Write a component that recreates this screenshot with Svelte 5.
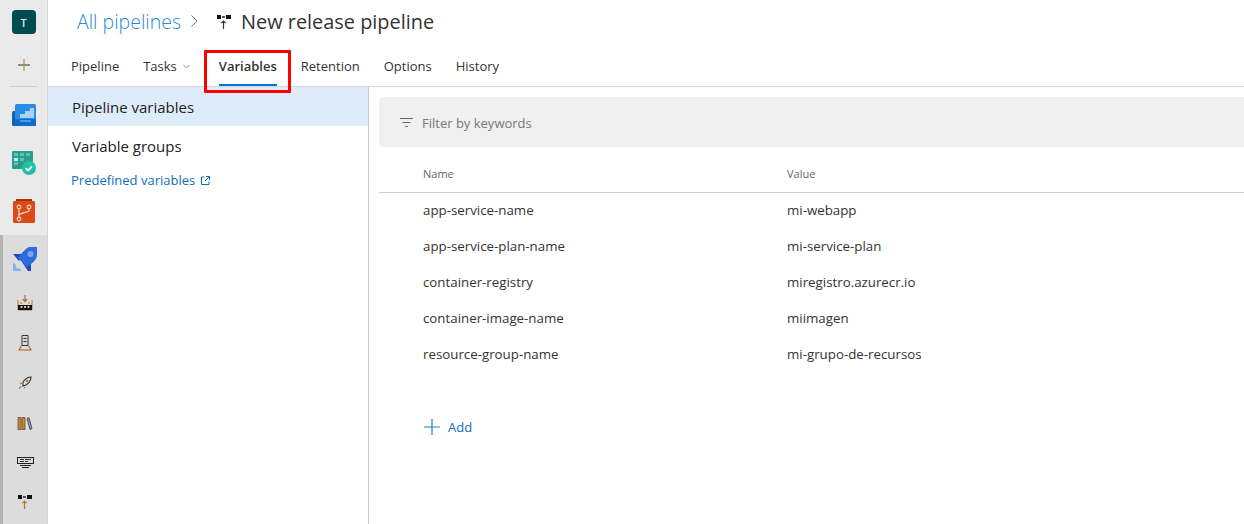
<script>
  const tabs = [
    { label: 'Pipeline' },
    { label: 'Tasks', caret: true },
    { label: 'Variables', active: true },
    { label: 'Retention' },
    { label: 'Options' },
    { label: 'History' }
  ];
  const variables = [
    ['app-service-name', 'mi-webapp'],
    ['app-service-plan-name', 'mi-service-plan'],
    ['container-registry', 'miregistro.azurecr.io'],
    ['container-image-name', 'miimagen'],
    ['resource-group-name', 'mi-grupo-de-recursos']
  ];
</script>

{#snippet pipelineIcon(arrow)}
  <svg class="pipe" width="16" height="16" viewBox="0 0 16 16">
    <rect x="1" y="0" width="4" height="4" fill="#111" />
    <rect x="6" y="1" width="3" height="2" fill="#555" />
    <rect x="10" y="0" width="5" height="4" fill="#111" />
    <path d="M7.500 14V6M5.300 8.200 7.500 6l2.200 2.200" fill="none" stroke={arrow} stroke-width="1.200" />
  </svg>
{/snippet}

<div class="page">
  <nav class="rail">
    <div class="rail-top">
      <div class="avatar">T</div>
      <svg class="plus" width="14" height="14" viewBox="0 0 14 14">
        <path d="M1 7h12" stroke="#333" stroke-width="1" />
        <path d="M7 1v12" stroke="#c58a3c" stroke-width="1.200" />
      </svg>
      <div class="rail-rule"></div>
      <svg class="boards" width="24" height="22" viewBox="0 0 24 22">
        <rect x="0" y="7" width="8" height="15" rx="1.500" fill="#1464b4" />
        <rect x="3" y="0" width="21" height="22" rx="1.500" fill="#2a8ae4" />
        <path d="M20 4h2v10H8v-4h5V7h5V4z" fill="#a6d2f4" />
        <rect x="3" y="15" width="21" height="7" fill="#0f6cc8" />
        <rect x="8" y="16" width="11" height="2" fill="#4a9fe4" />
      </svg>
      <svg class="tasks" width="24" height="24" viewBox="0 0 24 24">
        <rect x="0" y="0" width="21" height="18" rx="1.200" fill="#2a9d8f" />
        <path d="M2 2h4v3H2zM8 2h4v3H8zM14 2h4v3h-4zM8 7h4v3H8zM2 11h4v3H2z" fill="#5cc2b3" />
        <rect x="2" y="7" width="4" height="3" fill="#c8efe6" />
        <circle cx="17" cy="17" r="7" fill="#1fc0a5" />
        <path d="M13.600 17.200l2.400 2.300 4-4.200" fill="none" stroke="#fff" stroke-width="1.800" />
      </svg>
      <svg class="repos" width="22" height="24" viewBox="0 0 22 24">
        <rect x="3" y="0" width="16" height="3" fill="#a83408" />
        <rect x="0" y="2" width="22" height="22" rx="1.200" fill="#dc4a16" />
        <g fill="none" stroke="#f6d6c6" stroke-width="1.200">
          <circle cx="6" cy="8" r="1.800" />
          <circle cx="16" cy="8" r="1.800" />
          <circle cx="6" cy="20" r="1.800" />
          <path d="M6 10v8M16 10v1.500c0 2-10 2.500-10 5" />
        </g>
      </svg>
    </div>

    <div class="rail-bottom">
      <svg class="rocket" width="24" height="24" viewBox="0 0 24 24">
        <path d="M0 7h10L6 14zM9 15l9-2v11h-3z" fill="#1a4cc0" />
        <path d="M16 0h8v8c0 5-6 9-10 12l-9-9c3-4 7-9 11-11z" fill="#2f6ae0" />
        <circle cx="17.500" cy="7" r="3" fill="#7ba6f2" />
        <path d="M0 24v-9l3 3v3h3l3 3z" fill="#8fb0f0" />
      </svg>
      <svg class="sub" width="16" height="16" viewBox="0 0 16 16">
        <path d="M8 0v6M5.800 4 8 6.500 10.200 4" fill="none" stroke="#a8722f" stroke-width="1.200" />
        <path d="M1 5v10h14V5M4 7v2M12 7v2" fill="none" stroke="#b8752c" stroke-width="1" />
        <rect x="1" y="10" width="14" height="5" fill="#111" />
        <path d="M3.500 12h2M7 12h2M10.500 12h2" stroke="#fff" stroke-width="1.500" />
      </svg>
      <svg class="sub" width="16" height="16" viewBox="0 0 16 16">
        <path d="M5 .5h6v10H5zM6.500 3.500h3M6.500 6.500h3" fill="none" stroke="#333" stroke-width="1" />
        <path d="M4.500 10.500 2 15h12l-2.500-4.500" fill="none" stroke="#a8622c" stroke-width="1.100" />
      </svg>
      <svg class="sub" width="16" height="16" viewBox="0 0 16 16">
        <path d="M6 7c2-3 5-5 8-5 0 3-2 6-5 8l-3 1z" fill="none" stroke="#333" stroke-width="1.100" />
        <circle cx="10" cy="6" r="1.200" fill="#b8752c" />
        <path d="M5 8 3 9M8 12l-1 1M4 11l-2 3" stroke="#a8722f" stroke-width="1.100" />
      </svg>
      <svg class="sub" width="16" height="16" viewBox="0 0 16 16">
        <path d="M1 2.500h3v12H1zM5 2.500h3v12H5z" fill="#c58a3c" stroke="#704a20" stroke-width=".8" />
        <path d="M10 3.500l2-.8 3 11-2 .8z" fill="#7fa8c8" stroke="#333" stroke-width=".8" />
      </svg>
      <svg class="sub" width="17" height="16" viewBox="0 0 17 16">
        <rect x=".5" y="2.500" width="16" height="6" fill="none" stroke="#222" />
        <path d="M3 4.500h4M8 4.500h6M3 6.500h4M8 6.500h3" stroke="#333" />
        <path d="M3 10.500h11M5 12.500h7" stroke="#222" />
      </svg>
      <div class="sub">{@render pipelineIcon('#b8752c')}</div>
    </div>
  </nav>

  <main class="main">
    <header class="title-row">
      <a class="crumb" href="#top">All pipelines</a>
      <svg class="crumb-sep" width="7" height="12" viewBox="0 0 7 12">
        <path d="M.5.5 6 6 .5 11.500" fill="none" stroke="#777" stroke-width="1" />
      </svg>
      <span class="title-icon">{@render pipelineIcon('#333')}</span>
      <h1>New release pipeline</h1>
    </header>

    <div class="tabs">
      {#each tabs as tab}
        <div class="tab" class:active={tab.active} class:has-caret={tab.caret}>
          <span>{tab.label}</span>
          {#if tab.caret}
            <svg width="7" height="5" viewBox="0 0 7 5">
              <path d="M.5 1 3.500 4l3-3" fill="none" stroke="#888" />
            </svg>
          {/if}
          {#if tab.active}<div class="callout"></div>{/if}
        </div>
      {/each}
    </div>

    <div class="panes">
      <aside class="side">
        <div class="side-item selected">Pipeline variables</div>
        <div class="side-item">Variable groups</div>
        <a class="predefined" href="#top">
          Predefined variables
          <svg width="9" height="9" viewBox="0 0 9 9">
            <path d="M3.500 1H.5v7.500H8V5.500M5 .5h3.500V4M8.500 .5 4 5" fill="none" stroke="#106ebe" />
          </svg>
        </a>
      </aside>

      <section class="content">
        <div class="filter">
          <svg width="13" height="10" viewBox="0 0 13 10">
            <path d="M0 .5h13M2.500 4.500h8M5 8.500h3" stroke="#666" />
          </svg>
          <span>Filter by keywords</span>
        </div>

        <div class="grid head">
          <span>Name</span>
          <span>Value</span>
        </div>
        {#each variables as [name, value]}
          <div class="grid row">
            <span>{name}</span>
            <span>{value}</span>
          </div>
        {/each}

        <div class="add">
          <svg width="16" height="16" viewBox="0 0 16 16">
            <path d="M8 0v16M0 8h16" stroke="#2c7cc8" stroke-width="1.200" />
          </svg>
          <span>Add</span>
        </div>
      </section>
    </div>
  </main>
</div>

<style>
  :global(body) {
    margin: 0;
    background: #fff;
  }

  .page {
    display: flex;
    height: 524px;
    overflow: hidden;
    font-family: "Open Sans", "Noto Sans", sans-serif;
    color: #333;
  }

  .rail {
    width: 47px;
    flex: none;
    display: flex;
    flex-direction: column;
    background: #eaeaea;
    border-right: 1px solid #d6d6d6;
  }

  .rail svg,
  .rail-top > div {
    flex: none;
  }

  .rail-top {
    height: 235px;
    display: flex;
    flex-direction: column;
    align-items: center;
    flex: none;
  }

  .avatar {
    width: 24px;
    height: 24px;
    margin-top: 10px;
    border-radius: 4px;
    background: #004b50;
    color: #d8e6e6;
    font-size: 11px;
    font-weight: 600;
    display: flex;
    align-items: center;
    justify-content: center;
  }

  .plus {
    margin-top: 24px;
  }

  .rail-rule {
    width: 27px;
    height: 1px;
    background: #cfcfcf;
    margin-top: 14px;
  }

  .boards {
    margin-top: 17px;
  }

  .tasks {
    margin-top: 25px;
  }

  .repos {
    margin-top: 24px;
  }

  .rail-bottom {
    flex: 1;
    display: flex;
    flex-direction: column;
    align-items: center;
    background: #dcdcdc;
    border-left: 3px solid #b4b4b4;
    padding-top: 12px;
  }

  .sub {
    margin-top: 24px;
    display: block;
    height: 16px;
  }

  .pipe {
    display: block;
  }

  .main {
    flex: 1;
    min-width: 0;
    display: flex;
    flex-direction: column;
  }

  .title-row {
    height: 44px;
    box-sizing: border-box;
    padding: 0 0 2px 29px;
    display: flex;
    align-items: center;
    flex: none;
  }

  .crumb {
    font-size: 19.5px;
    color: #2b88d8;
    text-decoration: none;
    font-weight: 300;
  }

  .crumb-sep {
    margin-left: 10px;
  }

  .title-icon {
    margin-left: 18px;
    margin-top: 4px;
    display: flex;
  }

  h1 {
    margin: 0 0 0 9px;
    font-size: 19.9px;
    font-weight: 400;
    color: #333;
  }

  .tabs {
    height: 42px;
    display: flex;
    padding-left: 11px;
    border-bottom: 1px solid #d6d6d6;
    flex: none;
  }

  .tab {
    position: relative;
    display: flex;
    align-items: center;
    gap: 6px;
    height: 42px;
    box-sizing: border-box;
    padding: 2px 12px 0;
    font-size: 13px;
  }

  .tab.has-caret {
    padding-right: 17px;
  }

  .tab.active {
    font-weight: 600;
  }

  .tab.active::after {
    content: "";
    position: absolute;
    left: 12px;
    right: 12px;
    bottom: 0;
    height: 2px;
    background: #0078d4;
  }

  .callout {
    position: absolute;
    left: -3px;
    top: 6px;
    width: 87px;
    height: 43px;
    box-sizing: border-box;
    border: 3px solid #f00;
    border-radius: 1px;
  }

  .panes {
    flex: 1;
    display: flex;
    min-height: 0;
  }

  .side {
    width: 320px;
    flex: none;
    border-right: 1px solid #c8c8c8;
  }

  .side-item {
    height: 39px;
    display: flex;
    align-items: center;
    padding-left: 24px;
    font-size: 15px;
    color: #222;
  }

  .selected {
    background: #deecf9;
  }

  .predefined {
    display: flex;
    align-items: center;
    gap: 6px;
    margin: 6px 0 0 23px;
    font-size: 13px;
    color: #106ebe;
    text-decoration: none;
  }

  .content {
    flex: 1;
    min-width: 0;
    padding: 10px 0 0 10px;
  }

  .filter {
    height: 50px;
    box-sizing: border-box;
    padding: 2px 0 0 21px;
    display: flex;
    align-items: center;
    gap: 9px;
    background: #f0f0f0;
    border-radius: 4px 0 0 4px;
    font-size: 13px;
    color: #777;
  }

  .grid {
    display: grid;
    grid-template-columns: 364px 1fr;
    padding-left: 44px;
    align-items: center;
  }

  .head {
    height: 46px;
    box-sizing: border-box;
    padding-top: 7px;
    margin-bottom: -1px;
    font-size: 11px;
    color: #666;
    border-bottom: 1px solid #ccc;
  }

  .row {
    height: 36px;
    font-size: 13.3px;
    color: #333;
  }

  .add {
    display: flex;
    align-items: center;
    gap: 8px;
    margin: 46px 0 0 45px;
    font-size: 13px;
    color: #106ebe;
  }
</style>
